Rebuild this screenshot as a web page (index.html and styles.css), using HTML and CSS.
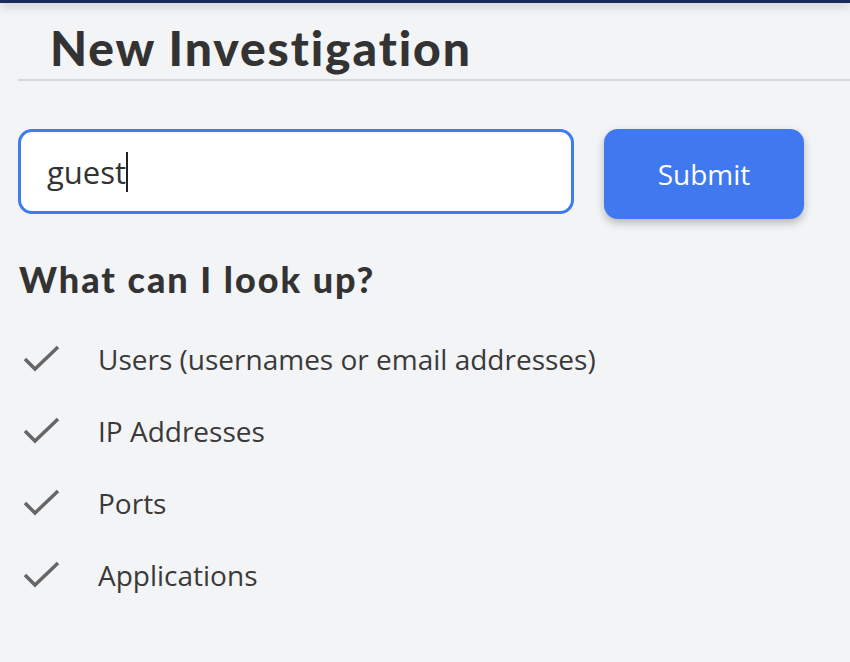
FILE: index.html
```html
<!DOCTYPE html>
<html>
<head>
<meta charset="utf-8">
<link rel="stylesheet" href="styles.css">
</head>
<body>
<div class="topbar"></div>
<main class="page">
  <h1 class="title">New Investigation</h1>
  <div class="search">
    <div class="input"><span>guest</span><span class="caret"></span></div>
    <button class="submit">Submit</button>
  </div>
  <h2 class="subtitle">What can I look up?</h2>
  <ul class="list">
    <li><svg class="check" viewBox="0 0 40 30" width="40" height="30"><path d="M3 15 L13 25 L36 3" fill="none" stroke="#666" stroke-width="3.5"/></svg><span>Users (usernames or email addresses)</span></li>
    <li><svg class="check" viewBox="0 0 40 30" width="40" height="30"><path d="M3 15 L13 25 L36 3" fill="none" stroke="#666" stroke-width="3.5"/></svg><span>IP Addresses</span></li>
    <li><svg class="check" viewBox="0 0 40 30" width="40" height="30"><path d="M3 15 L13 25 L36 3" fill="none" stroke="#666" stroke-width="3.5"/></svg><span>Ports</span></li>
    <li><svg class="check" viewBox="0 0 40 30" width="40" height="30"><path d="M3 15 L13 25 L36 3" fill="none" stroke="#666" stroke-width="3.5"/></svg><span>Applications</span></li>
  </ul>
</main>
</body>
</html>
```
FILE: styles.css
```css
html, body { margin: 0; padding: 0; }
body {
  background: #f3f4f6;
  font-family: "Open Sans", sans-serif;
  color: #333;
  width: 850px;
  height: 662px;
  overflow: hidden;
}
.topbar {
  height: 3px;
  background: #1b2a5c;
  box-shadow: 0 2px 10px rgba(0,0,0,0.35);
}
.page { padding: 0 0 0 18px; }
.title {
  margin: 0;
  padding: 18px 0 4px 32px;
  font-family: "Lato", sans-serif;
  font-weight: 900;
  font-size: 48px;
  letter-spacing: 1.9px;
  line-height: 54px;
  color: #333;
  border-bottom: 2px solid #d9d9d9;
}
.search {
  display: flex;
  gap: 30px;
  margin-top: 48px;
  align-items: flex-start;
}
.input {
  box-sizing: border-box;
  width: 556px;
  height: 85px;
  border: 3px solid #3f7bf0;
  border-radius: 14px;
  background: #fff;
  display: flex;
  align-items: center;
  padding-left: 26px;
  font-size: 31px;
  color: #333;
}
.caret {
  display: inline-block;
  width: 2px;
  height: 40px;
  background: #222;
  margin-left: 0;
}
.submit {
  width: 200px;
  height: 90px;
  border: none;
  border-radius: 14px;
  background: #3f78ef;
  color: #fff;
  font-family: "Open Sans", sans-serif;
  font-size: 28px;
  box-shadow: 0 4px 8px rgba(0,0,0,0.25);
  padding: 0;
}
.subtitle {
  margin: 38px 0 0 1px;
  font-family: "Lato", sans-serif;
  font-weight: 900;
  font-size: 36px;
  letter-spacing: 2px;
  line-height: 44px;
  color: #333;
}
.list {
  list-style: none;
  margin: 22px 0 0 0;
  padding: 0;
}
.list li {
  display: flex;
  align-items: center;
  height: 72px;
  font-size: 28px;
  color: #3a3a3a;
}
.check { margin-left: 4px; margin-right: 36px; }
```
